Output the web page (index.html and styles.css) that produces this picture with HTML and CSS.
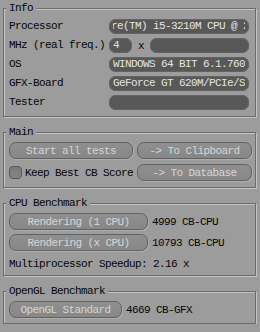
FILE: index.html
```html
<!DOCTYPE html>
<html>
<head>
<meta charset="utf-8">
<link rel="stylesheet" href="styles.css">
</head>
<body>
<div class="panel">

  <fieldset class="group group-info">
    <legend>Info</legend>
    <div class="info-grid">
      <span class="label">Processor</span>
      <span class="field"><span class="field-text shifted">re(TM) i5-3210M CPU @ 2.50GHz</span></span>
      <span class="label">MHz (real freq.)</span>
      <span class="mhz">
        <span class="field field-small"><span class="field-text">4</span></span>
        <span class="times">x</span>
        <span class="field field-fill"></span>
      </span>
      <span class="label">OS</span>
      <span class="field"><span class="field-text">WINDOWS 64 BIT 6.1.7601</span></span>
      <span class="label">GFX-Board</span>
      <span class="field"><span class="field-text">GeForce GT 620M/PCIe/SSE2</span></span>
      <span class="label">Tester</span>
      <span class="field"></span>
    </div>
  </fieldset>

  <fieldset class="group">
    <legend>Main</legend>
    <div class="main-grid">
      <button class="btn">Start all tests</button>
      <button class="btn">-&gt; To Clipboard</button>
      <label class="check"><span class="box"></span>Keep Best CB Score</label>
      <button class="btn">-&gt; To Database</button>
    </div>
  </fieldset>

  <fieldset class="group group-cpu">
    <legend>CPU Benchmark</legend>
    <div class="cpu-grid">
      <button class="btn">Rendering (1 CPU)</button>
      <span class="score">4999 CB-CPU</span>
      <button class="btn">Rendering (x CPU)</button>
      <span class="score">10793 CB-CPU</span>
      <span class="speedup">Multiprocessor Speedup: 2.16 x</span>
    </div>
  </fieldset>

  <fieldset class="group group-gl">
    <legend>OpenGL Benchmark</legend>
    <div class="gl-row">
      <button class="btn btn-gl">OpenGL Standard</button>
      <span class="score">4669 CB-GFX</span>
    </div>
  </fieldset>

</div>
</body>
</html>
```

FILE: styles.css
```css
* {
  box-sizing: border-box;
}

body {
  margin: 0;
  background: #9c9c9c;
  font-family: "Liberation Mono", "DejaVu Sans Mono", monospace;
  font-size: 11px;
  letter-spacing: -0.6px;
  color: #050505;
}

.panel {
  width: 260px;
  padding: 2px 4px 0 3px;
  display: flex;
  flex-direction: column;
  gap: 9px;
}

/* etched group box */
.group {
  margin: 0;
  min-width: 0;
  padding: 3px 3px 6px 5px;
  border: 1px solid #6b6b6b;
  box-shadow: inset 1px 1px 0 #c4c4c4, 1px 1px 0 #c4c4c4;
}

.group legend {
  margin-left: -3px;
  padding: 0 3px;
  line-height: 13px;
  background: #9c9c9c;
}

.group-info {
  padding-top: 4px;
}

.group-cpu {
  padding-bottom: 3px;
}

.group-gl {
  padding-bottom: 5px;
}

/* info */
.info-grid {
  display: grid;
  grid-template-columns: 100px 140px;
  grid-auto-rows: 15px;
  row-gap: 4px;
  align-items: center;
}

.label {
  line-height: 15px;
  white-space: nowrap;
}

.field {
  display: block;
  height: 15px;
  padding: 0 4px;
  border-radius: 7px;
  background: #585858;
  box-shadow: inset 0 0 0 1px #636363;
  color: #e4e4e4;
  line-height: 15px;
}

.field-text {
  display: block;
  overflow: hidden;
  white-space: nowrap;
}

.shifted {
  text-indent: -2px;
}

.mhz {
  display: flex;
  align-items: center;
  height: 15px;
}

.field-small {
  width: 23px;
  flex: none;
}

.times {
  width: 18px;
  text-align: center;
}

.field-fill {
  flex: 1;
}

/* buttons */
.btn {
  display: flex;
  align-items: center;
  justify-content: center;
  height: 17px;
  margin: 0;
  padding: 0;
  font: inherit;
  letter-spacing: inherit;
  color: #d6d6d6;
  border: 1px solid #626262;
  border-radius: 7px;
  background: linear-gradient(#8f8f8f, #878787);
  box-shadow: 1px 1px 0 #adadad;
}

.main-grid {
  display: grid;
  grid-template-columns: 124px 1fr;
  grid-auto-rows: 17px;
  column-gap: 4px;
  row-gap: 5px;
}

.check {
  display: flex;
  align-items: center;
  gap: 3px;
  white-space: nowrap;
}

.box {
  width: 13px;
  height: 13px;
  flex: none;
  border: 1px solid #575757;
  border-radius: 4px;
  background: linear-gradient(#7a7a7a, #858585);
}

.cpu-grid {
  display: grid;
  grid-template-columns: 139px 1fr;
  grid-auto-rows: 17px;
  column-gap: 4px;
  row-gap: 4px;
  align-items: center;
}

.speedup {
  grid-column: 1 / 3;
  line-height: 14px;
  white-space: nowrap;
}

.score {
  white-space: nowrap;
}

.gl-row {
  display: flex;
  align-items: center;
  gap: 4px;
}

.btn-gl {
  width: 113px;
}
```
